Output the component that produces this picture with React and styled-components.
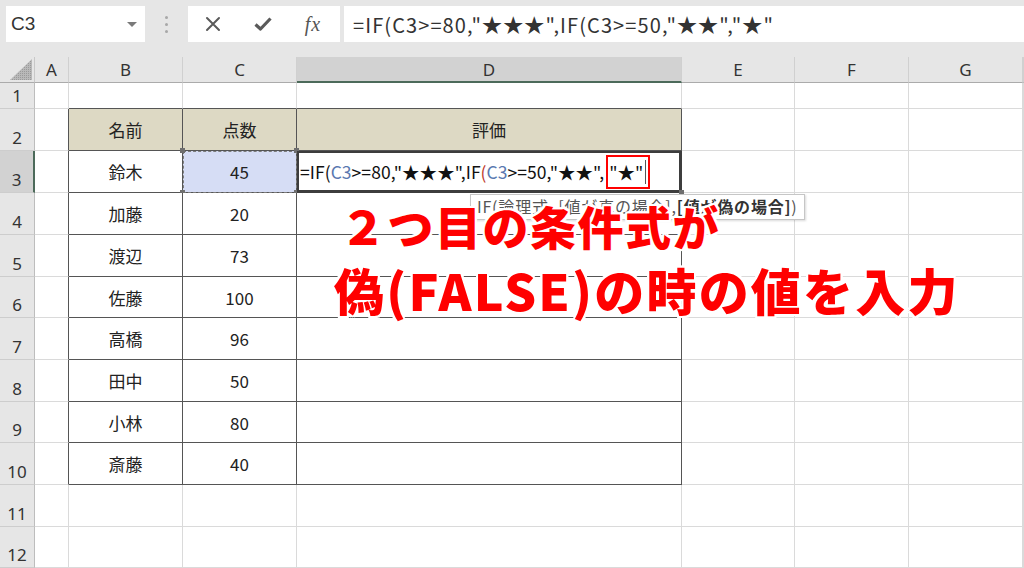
import React from 'react';
import styled, { createGlobalStyle } from 'styled-components';

const GlobalStyle = createGlobalStyle`
  html, body { margin: 0; padding: 0; background: #fff; }
  body {
    width: 1024px; height: 568px; overflow: hidden;
    font-family: "Noto Sans", "Noto Sans CJK JP", sans-serif;
  }
`;

const Window = styled.div`
  position: relative;
  width: 1024px;
  height: 568px;
  overflow: hidden;
  background: #e6e6e6;
  display: flex;
  flex-direction: column;
`;

const FormulaBar = styled.div`
  height: 57px;
  box-sizing: border-box;
  padding: 6px 0 0 6px;
  display: flex;
  align-items: flex-start;
  flex-shrink: 0;
`;

const NameBox = styled.div`
  width: 139px;
  height: 36px;
  box-sizing: border-box;
  background: #fff;
  display: flex;
  align-items: center;
  justify-content: space-between;
  padding: 0 8px 0 5px;
  font-family: "Liberation Sans", Arial, sans-serif;
  font-size: 19px;
  color: #333;
`;

const DropArrow = styled.span`
  width: 0; height: 0;
  border-left: 5px solid transparent;
  border-right: 5px solid transparent;
  border-top: 5px solid #7a7a7a;
`;

const Grip = styled.div`
  width: 43px;
  height: 36px;
  display: flex;
  flex-direction: column;
  align-items: center;
  justify-content: center;
  gap: 4px;
  span { width: 3px; height: 3px; border-radius: 50%; background: #a8a8a8; }
`;

const ButtonBox = styled.div`
  width: 152px;
  height: 36px;
  background: #fff;
  display: grid;
  grid-template-columns: 50px 50px 50px;
  align-items: center;
  justify-items: center;
  color: #555;
`;

const Fx = styled.span`
  font-family: "Liberation Serif", "DejaVu Serif", serif;
  font-style: italic;
  font-size: 20px;
  color: #555;
  letter-spacing: 1px;
`;

const FormulaInput = styled.div`
  flex: 1;
  margin-left: 4px;
  height: 36px;
  background: #fff;
  display: flex;
  align-items: center;
  padding-left: 9px;
  font-family: "Noto Sans CJK JP", sans-serif;
  font-size: 20px;
  color: #333;
  white-space: nowrap;
  letter-spacing: 1.1px;
`;

const Sheet = styled.div`
  flex: 1;
  display: grid;
  grid-template-columns: 35px 34px 114px 114px 385px 113px 114px 114px 1fr;
  grid-template-rows: 26px 26px 42px 42px 42px 42px 41px 42px 42px 41px 42px 42px 41px;
  background: #fff;
`;

const Corner = styled.div`
  background: #e6e6e6;
  border-right: 1px solid #c8c8c8;
  border-bottom: 1px solid #ababab;
  box-sizing: border-box;
  display: flex;
  align-items: flex-end;
  justify-content: flex-end;
  padding: 0 2px 2px 0;
`;

const ColHead = styled.div`
  box-sizing: border-box;
  background: ${p => (p.$sel ? '#d2d2d2' : '#e6e6e6')};
  border-right: 1px solid #d0d0d0;
  border-bottom: ${p => (p.$sel ? '2px solid #4c6a5a' : '1px solid #ababab')};
  display: flex;
  align-items: center;
  justify-content: center;
  font-family: "Noto Sans", sans-serif;
  font-size: 17px;
  color: #333;
`;

const RowHead = styled.div`
  box-sizing: border-box;
  background: ${p => (p.$sel ? '#d2d2d2' : '#e6e6e6')};
  border-right: ${p => (p.$sel ? '2px solid #4c6a5a' : '1px solid #bdbdbd')};
  border-bottom: 1px solid #cdcdcd;
  display: flex;
  align-items: flex-end;
  justify-content: center;
  padding-bottom: 1px;
  font-family: "Noto Sans", sans-serif;
  font-size: 17px;
  color: #333;
`;

const Cell = styled.div`
  position: relative;
  box-sizing: border-box;
  background: ${p => p.$bg || '#fff'};
  border-right: 1px solid ${p => (p.$darkR ? '#555' : '#dadada')};
  border-bottom: 1px solid ${p => (p.$darkB ? '#555' : '#dadada')};
  display: flex;
  align-items: center;
  justify-content: center;
  font-family: "Noto Sans CJK JP", sans-serif;
  font-size: 17px;
  color: #222;
  white-space: nowrap;
  ${p => p.$ref && `outline: 1px dashed #7d7d7d; outline-offset: -1px;`}
`;

const ActiveCell = styled(Cell)`
  justify-content: flex-start;
  padding-left: 3px;
  box-shadow: inset 0 0 0 2px #3d3d3d;
  border-color: #3d3d3d;
  color: #111;
  font-size: 17.5px;
  letter-spacing: 0.05px;
  overflow: visible;
  z-index: 2;
`;

const Handle = styled.span`
  position: absolute;
  width: 5px;
  height: 5px;
  background: #6f6f6f;
  ${p => (p.$v === 't' ? 'top: -3px;' : 'bottom: -3px;')}
  ${p => (p.$h === 'l' ? 'left: -3px;' : 'right: -3px;')}
`;

const Ref = styled.span`
  color: #5a78b0;
`;

const Paren = styled.span`
  color: #c0392b;
`;

const Boxed = styled.span`
  display: inline-flex;
  align-items: center;
  height: 34px;
  box-sizing: border-box;
  border: 2px solid #ff0000;
  padding: 0 2px 0 1px;
  margin-left: 2px;
`;

const Caret = styled.span`
  display: inline-block;
  width: 1px;
  height: 24px;
  background: #555;
  margin-left: 2px;
`;

const Tooltip = styled.div`
  position: absolute;
  left: 470px;
  top: 194px;
  height: 26px;
  box-sizing: border-box;
  padding: 0 6px;
  background: #fff;
  border: 1px solid #c6c6c6;
  box-shadow: 1px 1px 2px rgba(0,0,0,0.15);
  display: flex;
  align-items: flex-start;
  font-family: "Noto Sans CJK JP", sans-serif;
  font-size: 16px;
  letter-spacing: 0.8px;
  line-height: 22px;
  color: #555;
  white-space: nowrap;
  z-index: 3;
  b { font-weight: 700; color: #333; }
`;

const Callout = styled.div`
  position: absolute;
  left: 340px;
  top: 198px;
  z-index: 4;
  display: flex;
  flex-direction: column;
  gap: 6px;
  font-family: "Noto Sans CJK JP", sans-serif;
  font-weight: 900;
  color: #ff0000;
  white-space: nowrap;
  text-shadow:
    2px 0 0 #fff, -2px 0 0 #fff, 0 2px 0 #fff, 0 -2px 0 #fff,
    2px 2px 0 #fff, -2px -2px 0 #fff, 2px -2px 0 #fff, -2px 2px 0 #fff;
`;

const CalloutLine = styled.div`
  font-size: ${p => p.$size}px;
  line-height: 1.2;
  letter-spacing: ${p => p.$ls}px;
  margin-left: ${p => p.$indent || 0}px;
`;

const XIcon = () => (
  <svg width="18" height="18" viewBox="0 0 18 18">
    <path d="M3 3 L15 15 M15 3 L3 15" stroke="#5a5a5a" strokeWidth="2" fill="none" strokeLinecap="round" />
  </svg>
);

const CheckIcon = () => (
  <svg width="20" height="18" viewBox="0 0 20 18">
    <path d="M2.5 9.5 L7.5 14 L17.5 3.5" stroke="#5a5a5a" strokeWidth="3.2" fill="none" strokeLinejoin="round" />
  </svg>
);

const CornerTriangle = () => (
  <svg width="22" height="21" viewBox="0 0 22 21">
    <defs>
      <pattern id="dots" width="2" height="2" patternUnits="userSpaceOnUse">
        <rect width="2" height="2" fill="#b9b9b9" />
        <rect width="1" height="1" fill="#9a9a9a" />
      </pattern>
    </defs>
    <polygon points="22,0 22,21 0,21" fill="url(#dots)" />
  </svg>
);

const COLS = ['A', 'B', 'C', 'D', 'E', 'F', 'G', ''];
const ROW_COUNT = 12;

const TABLE = {
  2: ['名前', '点数', '評価'],
  3: ['鈴木', '45', null],
  4: ['加藤', '20', ''],
  5: ['渡辺', '73', ''],
  6: ['佐藤', '100', ''],
  7: ['高橋', '96', ''],
  8: ['田中', '50', ''],
  9: ['小林', '80', ''],
  10: ['斎藤', '40', ''],
};

const FormulaText = () => (
  <>
    =IF(<Ref>C3</Ref>&gt;=80,"★★★",IF<Paren>(</Paren><Ref>C3</Ref>&gt;=50,"★★",
    <Boxed>"★"<Caret /></Boxed>
  </>
);

function renderRow(r) {
  const cells = [];
  cells.push(<RowHead key={`h${r}`} $sel={r === 3}>{r}</RowHead>);
  const inTable = r >= 2 && r <= 10;
  COLS.forEach((c, i) => {
    const key = `${c}${r}-${i}`;
    if (c === 'A') {
      cells.push(<Cell key={key} $darkR={inTable} />);
      return;
    }
    if (c === 'B' || c === 'C' || c === 'D') {
      const idx = c === 'B' ? 0 : c === 'C' ? 1 : 2;
      if (!inTable) {
        cells.push(<Cell key={key} $darkB={r === 1} />);
        return;
      }
      if (r === 3 && c === 'D') {
        cells.push(
          <ActiveCell key={key} $darkR $darkB>
            <FormulaText />
            <Handle $v="b" $h="r" />
          </ActiveCell>
        );
        return;
      }
      if (r === 3 && c === 'C') {
        cells.push(
          <Cell key={key} $darkR $darkB $bg="#d6ddf5" $ref>
            {TABLE[r][idx]}
            <Handle $v="t" $h="l" />
            <Handle $v="t" $h="r" />
            <Handle $v="b" $h="l" />
            <Handle $v="b" $h="r" />
          </Cell>
        );
        return;
      }
      cells.push(
        <Cell key={key} $darkR $darkB $bg={r === 2 ? '#ddd9c4' : undefined}>
          {TABLE[r][idx]}
        </Cell>
      );
      return;
    }
    cells.push(<Cell key={key} />);
  });
  return cells;
}

export default function App() {
  const rows = [];
  for (let r = 1; r <= ROW_COUNT; r++) rows.push(...renderRow(r));
  return (
    <>
      <GlobalStyle />
      <Window>
        <FormulaBar>
          <NameBox>
            C3
            <DropArrow />
          </NameBox>
          <Grip><span /><span /><span /></Grip>
          <ButtonBox>
            <XIcon />
            <CheckIcon />
            <Fx>fx</Fx>
          </ButtonBox>
          <FormulaInput>=IF(C3&gt;=80,"★★★",IF(C3&gt;=50,"★★","★"</FormulaInput>
        </FormulaBar>
        <Sheet>
          <Corner><CornerTriangle /></Corner>
          {COLS.map((c, i) => (
            <ColHead key={`c${i}`} $sel={c === 'D'}>{c}</ColHead>
          ))}
          {rows}
        </Sheet>
        <Tooltip>IF(論理式, [値が真の場合], <b>[値が偽の場合]</b>)</Tooltip>
        <Callout>
          <CalloutLine $size={46} $ls={1.5}>２つ目の条件式が</CalloutLine>
          <CalloutLine $size={50} $ls={2.2} $indent={-6}>偽(FALSE)の時の値を入力</CalloutLine>
        </Callout>
      </Window>
    </>
  );
}
